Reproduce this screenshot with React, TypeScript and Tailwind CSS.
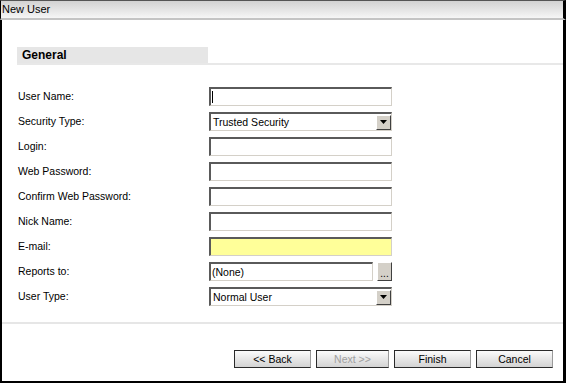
import React from 'react';

const inset =
  'border-t-2 border-l-2 border-b border-r border-t-[#5a5a5a] border-l-[#5a5a5a] border-b-[#d4d0c8] border-r-[#d4d0c8]';

function TextBox({ yellow, cursor, className = 'w-[183px]' }: { yellow?: boolean; cursor?: boolean; className?: string }) {
  return (
    <div className={`${className} h-[19px] ${inset} ${yellow ? 'bg-[#ffff99]' : 'bg-white'} flex items-center pl-[1px]`}>
      {cursor && <span className="w-px h-[12px] bg-black" />}
    </div>
  );
}

function Select({ value }: { value: string }) {
  return (
    <div className={`w-[183px] h-[19px] ${inset} bg-white flex items-center justify-between`}>
      <span className="pl-[2px] leading-none">{value}</span>
      <span className="w-[15px] h-[15px] bg-[#d4d0c8] border border-t-white border-l-white border-b-[#404040] border-r-[#404040] flex items-center justify-center">
        <svg width="7" height="4" viewBox="0 0 7 4">
          <path d="M0 0h7L3.5 4z" fill="#000" />
        </svg>
      </span>
    </div>
  );
}

function Btn({ label, disabled, w = 'w-[77px]' }: { label: string; disabled?: boolean; w?: string }) {
  return (
    <button
      type="button"
      className={`${w} h-[18px] border border-[#2a2a2a] border-r-[#9a9a9a] bg-gradient-to-b from-[#fbfbfb] to-[#d3d3d3] leading-none ${disabled ? 'text-[#a0a0a0]' : 'text-black'}`}
    >
      {label}
    </button>
  );
}

const rows: { label: string; field: React.ReactNode }[] = [
  { label: 'User Name:', field: <TextBox cursor /> },
  { label: 'Security Type:', field: <Select value="Trusted Security" /> },
  { label: 'Login:', field: <TextBox /> },
  { label: 'Web Password:', field: <TextBox /> },
  { label: 'Confirm Web Password:', field: <TextBox /> },
  { label: 'Nick Name:', field: <TextBox /> },
  { label: 'E-mail:', field: <TextBox yellow /> },
  {
    label: 'Reports to:',
    field: (
      <div className="flex items-center gap-[4px]">
        <div className={`w-[164px] h-[19px] ${inset} bg-white flex items-center pl-[1px] leading-none`}>(None)</div>
        <span className="w-[15px] h-[19px] bg-[#d4d0c8] border border-t-white border-l-white border-b-[#404040] border-r-[#404040] flex items-end justify-center leading-[12px] text-[10px]">
          ...
        </span>
      </div>
    ),
  },
  { label: 'User Type:', field: <Select value="Normal User" /> },
];

export default function App() {
  return (
    <div
      className="w-[566px] h-[383px] bg-white flex flex-col text-[10.5px] text-black overflow-hidden"
      style={{ fontFamily: '"Liberation Sans", Arial, sans-serif' }}
    >
      <div className="h-[20px] text-[11px] border-t border-t-[#555] border-l border-l-black border-r-[3px] border-r-black border-b-2 border-b-[#c4c4c4] bg-gradient-to-b from-[#d2d2d2] to-[#f6f6f6] flex items-center pl-[1px]">
        New User
      </div>

      <div className="flex-1 flex flex-col border-l-2 border-r-[3px] border-b-2 border-black">
        <div className="mt-[27px] ml-[15px] flex border-b-2 border-[#e8e8e8]">
          <div className="w-[191px] h-[16px] bg-[#e6e6e6] pl-[5px] flex items-center font-bold text-[12px]">General</div>
        </div>

        <div className="mt-[19px] pl-[16px] flex flex-col">
          {rows.map(r => (
            <div key={r.label} className="h-[25px] flex items-center">
              <span className="w-[191px]">{r.label}</span>
              {r.field}
            </div>
          ))}
        </div>

        <div className="mt-[13px] h-[2px] bg-[#e6e6e6]" />

        <div className="mt-[26px] flex justify-end gap-[5px] pr-[10px]">
          <Btn label="<< Back" />
          <Btn label="Next >>" disabled w="w-[73px]" />
          <Btn label="Finish" />
          <Btn label="Cancel" />
        </div>
      </div>
    </div>
  );
}
